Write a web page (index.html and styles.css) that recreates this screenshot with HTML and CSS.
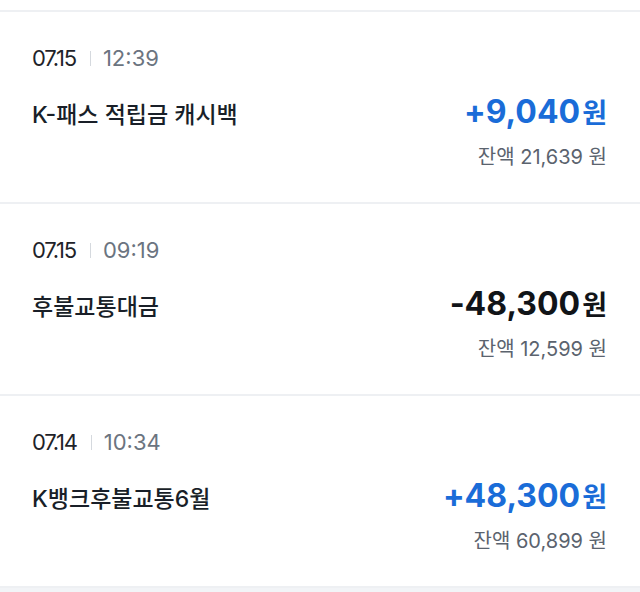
FILE: index.html
```html
<!DOCTYPE html>
<html lang="ko">
<head>
<meta charset="utf-8">
<link rel="stylesheet" href="styles.css">
</head>
<body>
<div class="top-spacer"></div>
<ul class="list">
  <li class="item">
    <div class="meta"><span class="date">07.15</span><span class="sep"></span><span class="time">12:39</span></div>
    <div class="main">
      <span class="title">K-패스 적립금 캐시백</span>
      <span class="amount plus">+9,040<span class="unit">원</span></span>
    </div>
    <div class="balance">잔액 21,639 원</div>
  </li>
  <li class="item">
    <div class="meta"><span class="date">07.15</span><span class="sep"></span><span class="time">09:19</span></div>
    <div class="main">
      <span class="title">후불교통대금</span>
      <span class="amount minus">-48,300<span class="unit">원</span></span>
    </div>
    <div class="balance">잔액 12,599 원</div>
  </li>
  <li class="item">
    <div class="meta"><span class="date">07.14</span><span class="sep"></span><span class="time">10:34</span></div>
    <div class="main">
      <span class="title">K뱅크후불교통6월</span>
      <span class="amount plus">+48,300<span class="unit">원</span></span>
    </div>
    <div class="balance">잔액 60,899 원</div>
  </li>
</ul>
<div class="bottom"></div>
</body>
</html>
```

FILE: styles.css
```css
html, body {
  margin: 0;
  padding: 0;
  background: #ffffff;
}
body {
  font-family: Inter, "Noto Sans CJK KR", sans-serif;
  color: #191f28;
  width: 640px;
  height: 592px;
  overflow: hidden;
}
.top-spacer {
  height: 10px;
}
.list {
  list-style: none;
  margin: 0;
  padding: 0;
}
.item {
  border-top: 2px solid #eef0f3;
  padding: 32px 33px 32px 32px;
  display: flex;
  flex-direction: column;
}
.meta {
  display: flex;
  align-items: center;
  height: 28px;
  font-size: 22px;
  line-height: 28px;
}
.date {
  color: #1f2329;
  letter-spacing: -1.2px;
}
.sep {
  width: 1px;
  height: 15px;
  background: #d5d9de;
  margin: 0 12px 0 14px;
}
.time {
  color: #6b7480;
}
.main {
  margin-top: 22px;
  height: 36px;
  display: flex;
  justify-content: space-between;
  align-items: baseline;
}
.title {
  font-size: 23px;
  font-weight: 500;
  line-height: 36px;
  color: #191f28;
}
.amount {
  font-size: 32px;
  line-height: 36px;
  font-weight: 700;
}
.unit {
  font-size: 27px;
  margin-left: 2px;
}
.amount.plus {
  color: #1a6cd8;
}
.amount.minus {
  color: #111418;
}
.balance {
  margin-top: 14px;
  align-self: flex-end;
  font-size: 20px;
  line-height: 26px;
  color: #5b636e;
}
.bottom {
  border-top: 2px solid #eef0f3;
  background: #f2f4f7;
  height: 10px;
}
```
